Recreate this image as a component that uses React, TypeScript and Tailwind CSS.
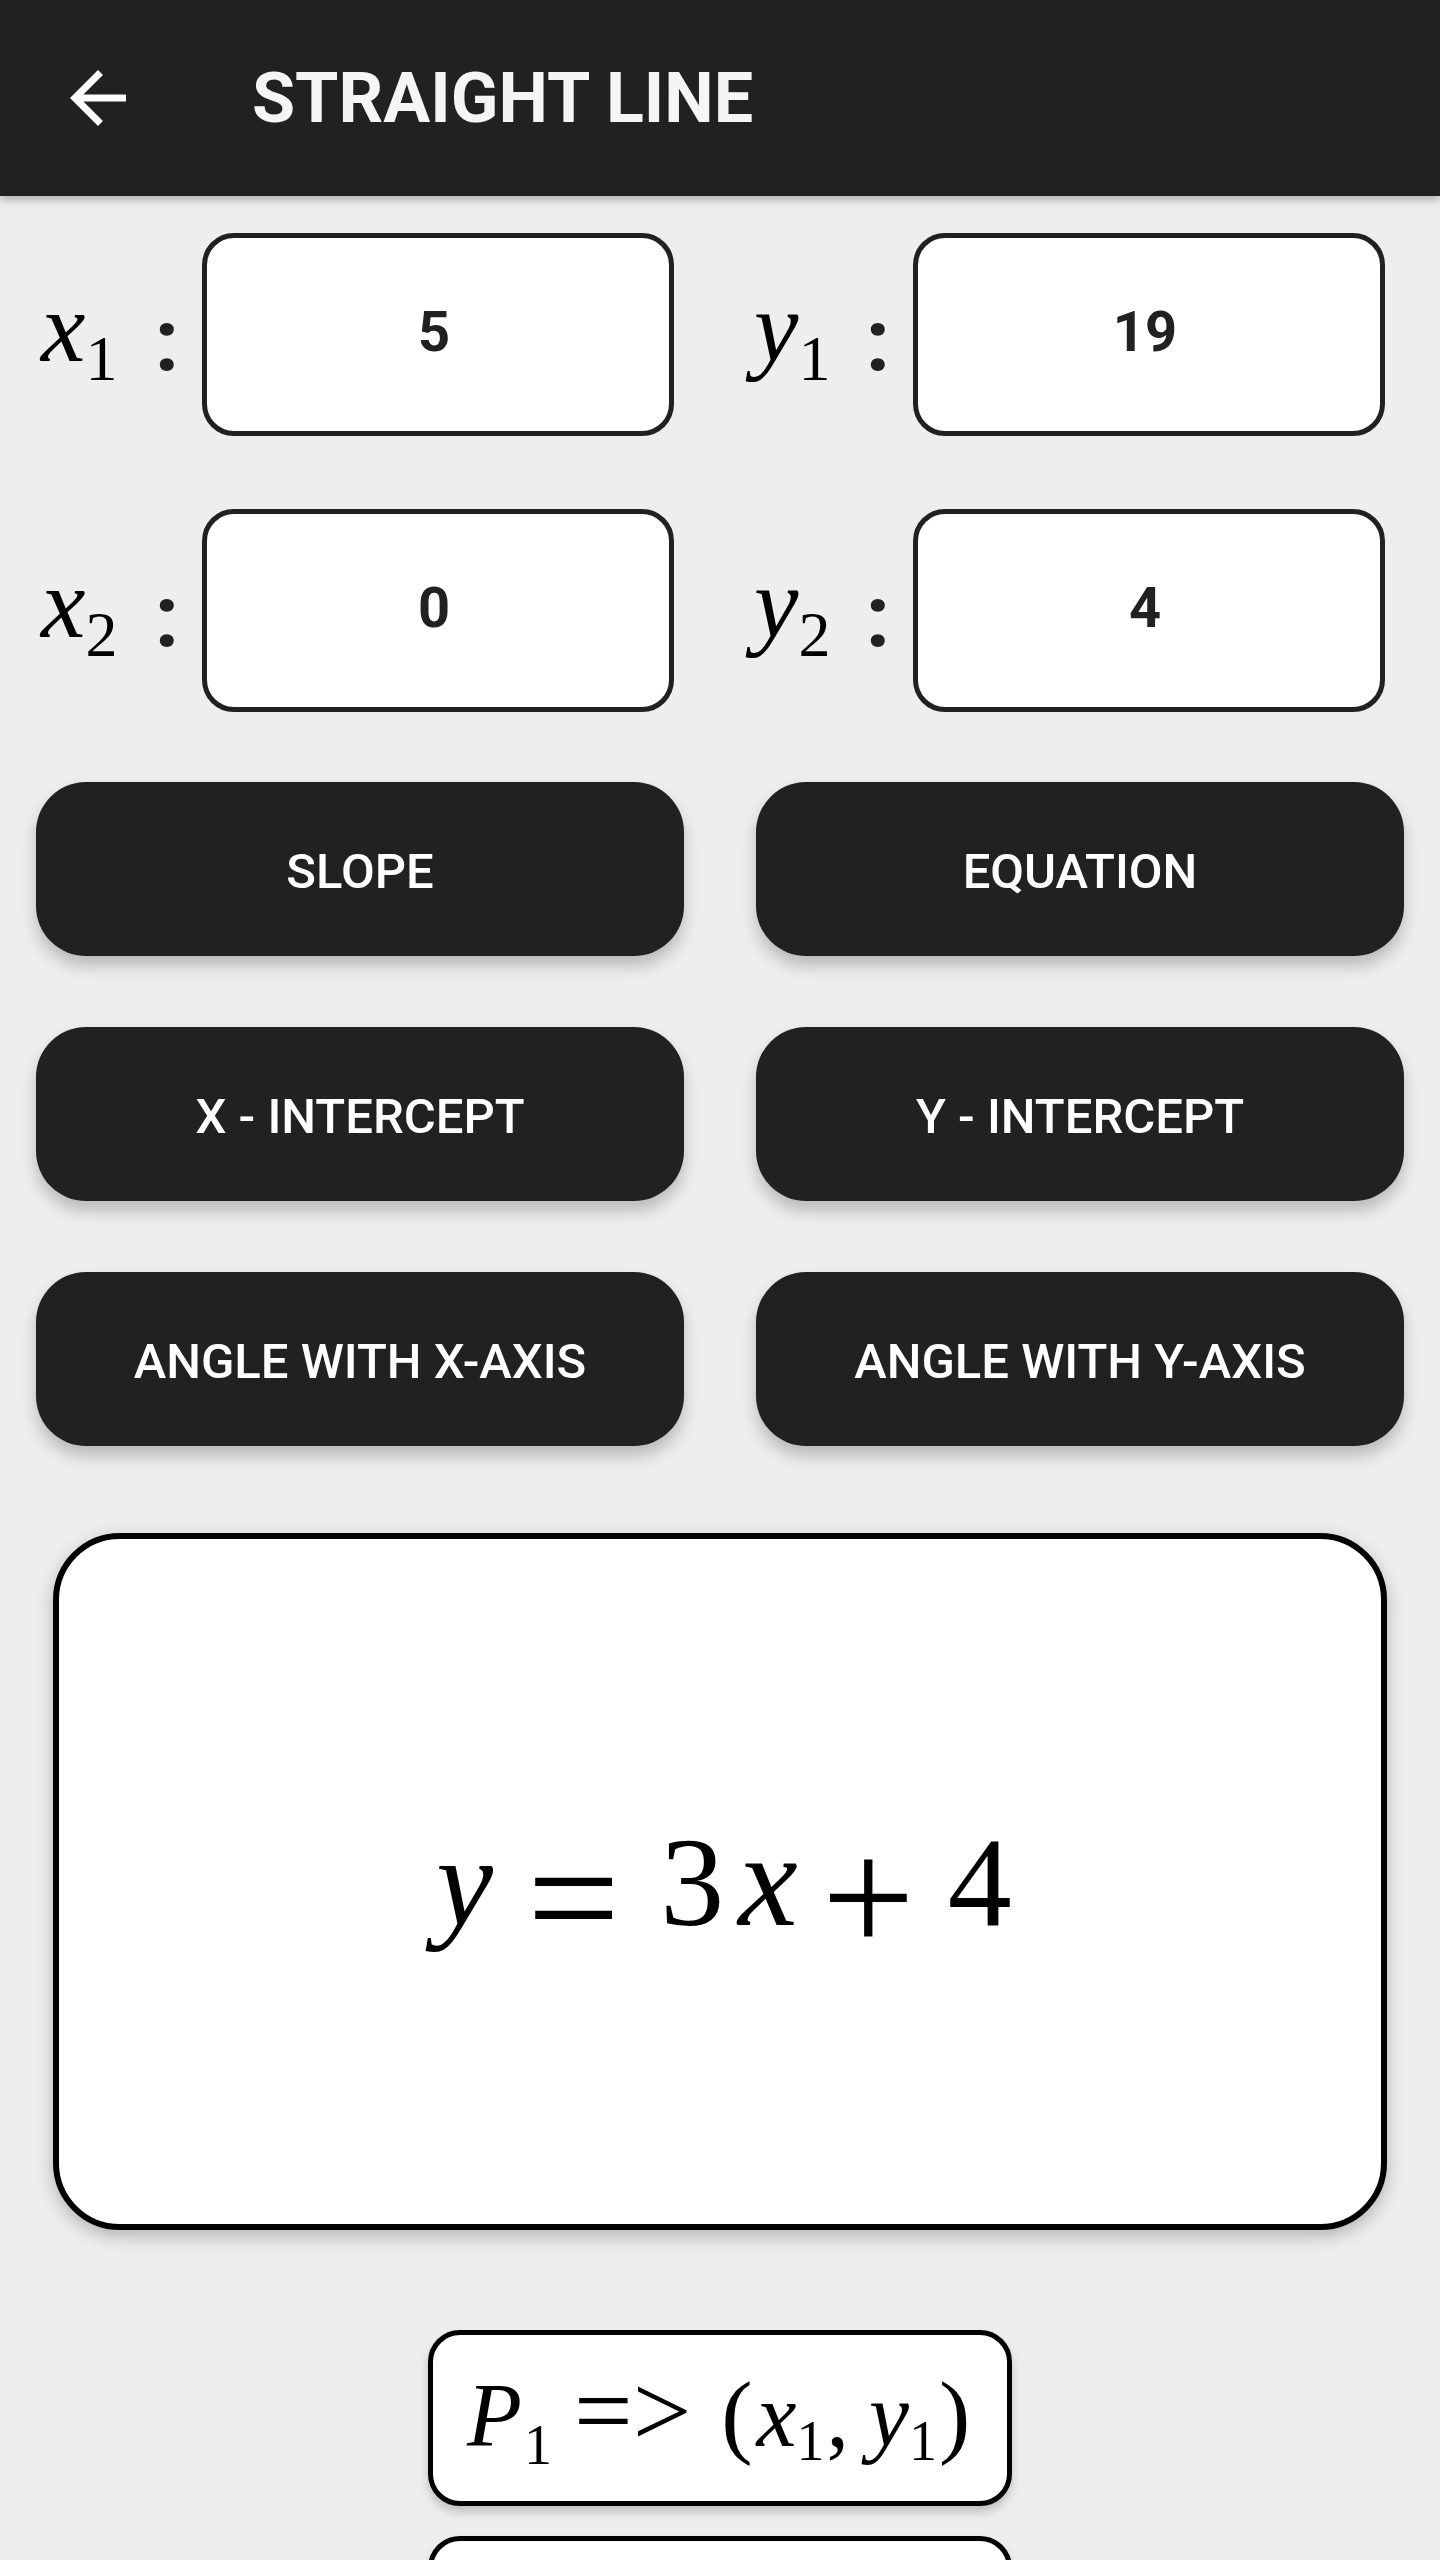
import { ReactNode } from "react";

const serif = "font-['Liberation_Serif','Times_New_Roman',serif]";

function Label({ v, sub, pl, w }: { v: string; sub: string; pl: string; w: string }) {
  return (
    <div className={`flex items-center h-full ${pl}`}>
      <span className={`${serif} ${w} leading-none text-black whitespace-nowrap`}>
        <span className="text-[100px] italic">{v}</span>
        <span className="text-[64px] align-[-19px]">{sub}</span>
      </span>
      <span className="w-[34px] text-center text-[88px] font-bold leading-none text-[#212121] translate-y-[6px]">:</span>
    </div>
  );
}

function Field({ v, sub, value, right }: { v: string; sub: string; value: string; right?: boolean }) {
  return (
    <div className="flex items-center h-[203px]">
      <Label v={v} sub={sub} pl={right ? "pl-[34px]" : "pl-[41px]"} w={right ? "w-[107px]" : "w-[109px]"} />
      <div className="ml-[18px] h-[203px] w-[472px] rounded-[32px] border-[5px] border-[#212121] bg-white flex items-center justify-center text-[56px] font-bold text-[#212121] pb-[6px] pr-[8px]">
        {value}
      </div>
    </div>
  );
}

function Btn({ children }: { children: ReactNode }) {
  return (
    <button className="h-[174px] rounded-[50px] bg-[#212121] text-white text-[49px] font-medium pt-[6px] shadow-[0_10px_16px_rgba(0,0,0,0.22)]">
      {children}
    </button>
  );
}

function PointBox({ n }: { n: string }) {
  return (
    <div className="mx-auto w-[584px] h-[176px] rounded-[32px] border-[5px] border-black bg-white shadow-[0_6px_10px_rgba(0,0,0,0.2)] flex items-center pl-[34px] pb-[4px]">
      <span className={`${serif} leading-none whitespace-nowrap text-black`}>
        <span className="text-[90px] italic">P</span>
        <span className="text-[56px] align-[-18px] ml-[2px]">{n}</span>
        <span className="text-[104px] ml-[22px]">=</span>
        <span className="text-[104px]">&gt;</span>
        <span className="text-[94px] ml-[30px]">(</span>
        <span className="text-[90px] italic ml-[4px]">x</span>
        <span className="text-[56px] align-[-14px]">{n}</span>
        <span className="text-[90px] ml-[2px]">,</span>
        <span className="text-[90px] italic ml-[20px]">y</span>
        <span className="text-[56px] align-[-14px]">{n}</span>
        <span className="text-[94px] ml-[2px]">)</span>
      </span>
    </div>
  );
}

export default function App() {
  return (
    <div className="min-h-[2560px] bg-[#eeeeee] font-['Roboto',sans-serif] overflow-hidden">
      <header className="relative z-10 h-[196px] bg-[#212121] flex items-center shadow-[0_4px_8px_rgba(0,0,0,0.25)]">
        <svg className="ml-[56px] w-[84px] h-[84px]" viewBox="0 0 24 24" fill="#ffffff">
          <path d="M20 11H7.83l5.59-5.59L12 4l-8 8 8 8 1.41-1.41L7.83 13H20v-2z" />
        </svg>
        <h1 className="ml-[112px] text-[70px] font-bold leading-none text-[#f5f5f5]">STRAIGHT LINE</h1>
      </header>

      <div className="grid grid-cols-2 gap-y-[73px] pt-[37px]">
        <Field v="x" sub="1" value="5" />
        <Field v="y" sub="1" value="19" right />
        <Field v="x" sub="2" value="0" />
        <Field v="y" sub="2" value="4" right />
      </div>

      <div className="grid grid-cols-2 gap-x-[72px] gap-y-[71px] px-[36px] mt-[70px]">
        <Btn>SLOPE</Btn>
        <Btn>EQUATION</Btn>
        <Btn>X - INTERCEPT</Btn>
        <Btn>Y - INTERCEPT</Btn>
        <Btn>ANGLE WITH X-AXIS</Btn>
        <Btn>ANGLE WITH Y-AXIS</Btn>
      </div>

      <div className="mx-[53px] mt-[87px] h-[697px] rounded-[67px] border-[6px] border-black bg-white shadow-[0_6px_18px_rgba(0,0,0,0.25)] flex items-center justify-center">
        <div className={`${serif} flex items-baseline leading-none text-black -translate-y-[12px]`}>
          <span className="text-[128px] italic ml-[8px]">y</span>
          <span className="text-[165px] ml-[34px] translate-y-[28px]">=</span>
          <span className="text-[128px] ml-[40px]">3</span>
          <span className="text-[134px] italic ml-[14px]">x</span>
          <span className="text-[165px] ml-[24px] translate-y-[28px]">+</span>
          <span className="text-[128px] ml-[33px]">4</span>
        </div>
      </div>

      <div className="mt-[100px] flex flex-col gap-[30px] pb-[40px]">
        <PointBox n="1" />
        <PointBox n="2" />
      </div>
    </div>
  );
}
